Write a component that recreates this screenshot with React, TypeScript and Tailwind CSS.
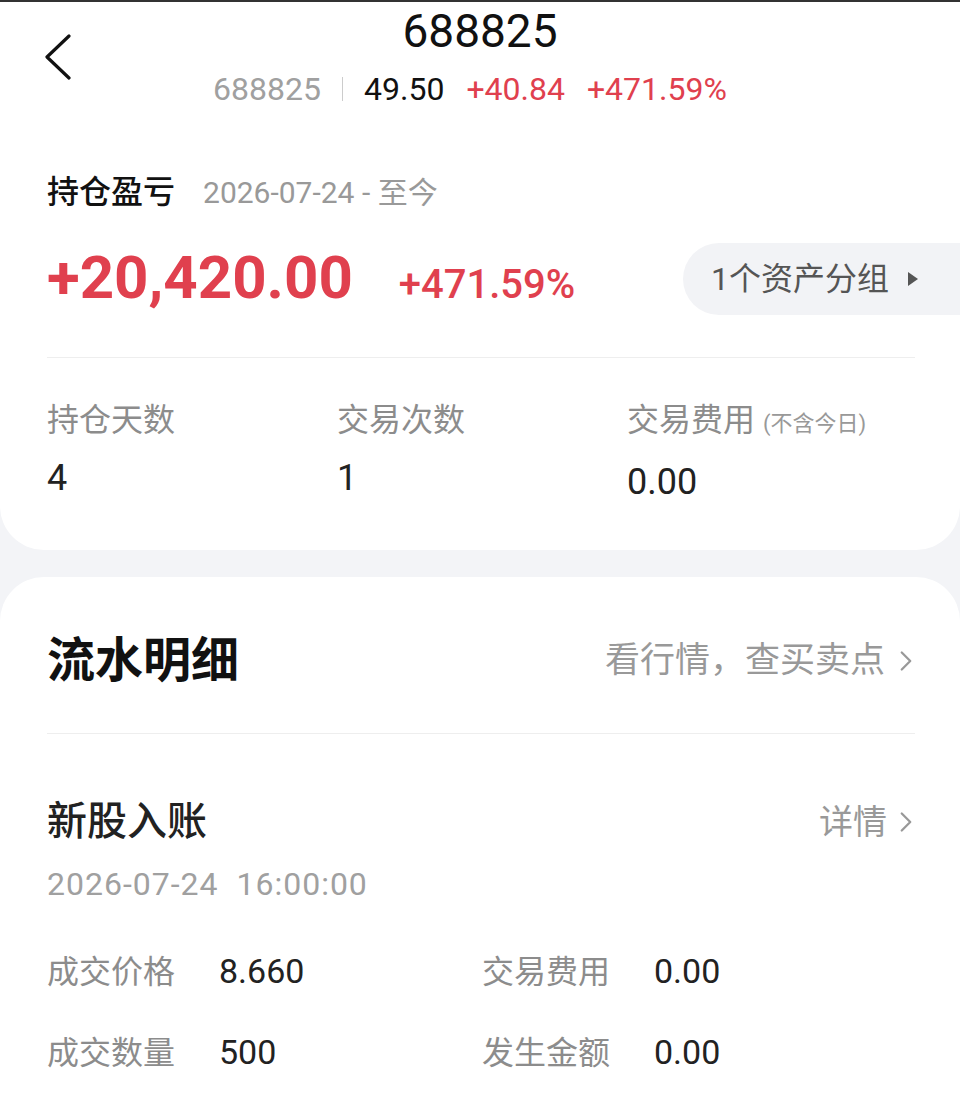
import { ChevronRight } from "lucide-react";

const font = { fontFamily: '"Roboto", "Noto Sans CJK SC", sans-serif' };

function Stat({ label, value, note }: { label: string; value: string; note?: string }) {
	return (
		<div className="flex flex-col">
			<div className="text-[32px] leading-[44px] text-[#8c8c8c] flex items-baseline">
				{label}
				{note && <span className="text-[22px] ml-2 text-[#999]">{note}</span>}
			</div>
			<div className="text-[36px] leading-[44px] text-[#222] mt-[14px]">{value}</div>
		</div>
	);
}

function Field({ label, value }: { label: string; value: string }) {
	return (
		<div className="flex items-center">
			<div className="w-[172px] text-[32px] text-[#8c8c8c]">{label}</div>
			<div className="text-[34px] text-[#222]">{value}</div>
		</div>
	);
}

export default function App() {
	return (
		<div className="w-[960px] h-[1106px] overflow-hidden bg-[#f3f4f7]" style={font}>
			<div className="h-[2px] bg-[#333]" />
			<div className="bg-white rounded-b-[44px] pb-[46px]">
				{/* header */}
				<div className="relative h-[126px] flex flex-col items-center">
					<svg width="30" height="46" viewBox="0 0 30 46" className="absolute left-[43px] top-[32px]">
						<path d="M26 2 L4 23 L26 44" fill="none" stroke="#111" strokeWidth="3.2" strokeLinecap="round" strokeLinejoin="round" />
					</svg>
					<div className="text-[46px] leading-[56px] text-[#111] mt-[1px]">688825</div>
					<div className="flex items-center text-[32px] leading-[40px] mt-[10px] mr-[20px]">
						<span className="text-[#a0a0a0]">688825</span>
						<span className="w-px h-[24px] bg-[#ccc] mx-[21px]" />
						<span className="text-[#111]">49.50</span>
						<span className="text-[#e0404e] ml-[22px]">+40.84</span>
						<span className="text-[#e0404e] ml-[22px]">+471.59%</span>
					</div>
				</div>

				<div className="pl-[47px]">
					<div className="flex items-center mt-[42px] h-[44px]">
						<span className="text-[32px] font-medium text-[#111]">持仓盈亏</span>
						<span className="text-[30px] text-[#999] ml-[28px]">2026-07-24 - 至今</span>
					</div>
					<div className="flex items-center justify-between mt-[28px]">
						<div className="flex items-baseline">
							<span className="text-[60px] font-bold text-[#e0404e] leading-[72px]">+20,420.00</span>
							<span className="text-[40px] font-medium text-[#e0404e] ml-[46px]">+471.59%</span>
						</div>
						<div className="bg-[#f2f3f6] rounded-l-full h-[72px] w-[277px] flex items-center pl-[28px] text-[32px] text-[#555]">
							1个资产分组
							<svg width="12" height="16" viewBox="0 0 12 16" className="ml-[18px]">
								<path d="M1 1 L11 8 L1 15 Z" fill="#555" />
							</svg>
						</div>
					</div>
					<div className="mr-[45px] h-px bg-[#eeeeee] mt-[42px]" />
					<div className="grid grid-cols-[290px_290px_1fr] mt-[40px]">
						<Stat label="持仓天数" value="4" />
						<Stat label="交易次数" value="1" />
						<Stat label="交易费用" value="0.00" note="(不含今日)" />
					</div>
				</div>
			</div>

			<div className="mt-[27px] bg-white rounded-t-[44px] pr-[45px] pl-[47px] h-[600px]">
				<div className="flex items-center justify-between h-[156px] pt-[12px]">
					<span className="text-[48px] font-bold text-[#111]">流水明细</span>
					<span className="flex items-center text-[35px] text-[#999]">
						看行情，查买卖点
						<ChevronRight size={34} strokeWidth={1.6} className="ml-[4px] -mr-[8px]" />
					</span>
				</div>
				<div className="h-px bg-[#eeeeee]" />
				<div className="flex items-center justify-between mt-[64px] h-[48px]">
					<span className="text-[40px] font-medium text-[#222]">新股入账</span>
					<span className="flex items-center text-[34px] text-[#999]">
						详情
						<ChevronRight size={34} strokeWidth={1.6} className="ml-[2px] -mr-[8px]" />
					</span>
				</div>
				<div className="text-[32px] tracking-[1px] text-[#a0a0a0] mt-[18px] leading-[40px] whitespace-pre">2026-07-24  16:00:00</div>
				<div className="grid grid-cols-[435px_1fr] gap-y-[30px] mt-[42px]">
					<Field label="成交价格" value="8.660" />
					<Field label="交易费用" value="0.00" />
					<Field label="成交数量" value="500" />
					<Field label="发生金额" value="0.00" />
				</div>
			</div>
		</div>
	);
}
